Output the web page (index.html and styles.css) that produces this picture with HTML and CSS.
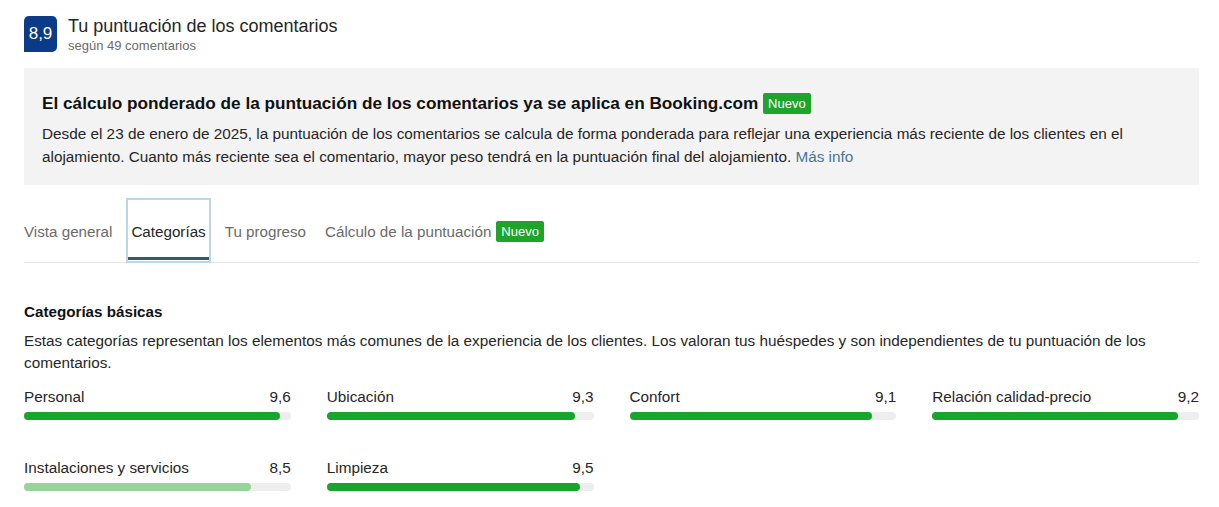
FILE: index.html
```html
<!DOCTYPE html>
<html>
<head>
    <title>Tu puntuación de los comentarios</title>
    <link rel="stylesheet" href="styles.css">
</head>
<body>
    <div class="page">
        <div class="score-header">
            <div class="score-badge">8,9</div>
            <div class="score-text">
                <div class="score-title">Tu puntuación de los comentarios</div>
                <div class="score-sub">según 49 comentarios</div>
            </div>
        </div>

        <div class="notice">
            <h2>El cálculo ponderado de la puntuación de los comentarios ya se aplica en Booking.com <span class="tag">Nuevo</span></h2>
            <p>Desde el 23 de enero de 2025, la puntuación de los comentarios se calcula de forma ponderada para reflejar una experiencia más reciente de los clientes en el alojamiento. Cuanto más reciente sea el comentario, mayor peso tendrá en la puntuación final del alojamiento. <a href="#">Más info</a></p>
        </div>

        <div class="tabs">
            <a class="tab" href="#">Vista general</a>
            <a class="tab active" href="#">Categorías</a>
            <a class="tab" href="#">Tu progreso</a>
            <a class="tab" href="#">Cálculo de la puntuación <span class="tag">Nuevo</span></a>
        </div>

        <h3>Categorías básicas</h3>
        <p class="desc">Estas categorías representan los elementos más comunes de la experiencia de los clientes. Los valoran tus huéspedes y son independientes de tu puntuación de los comentarios.</p>

        <div class="categories">
            <div class="cat">
                <div class="cat-row"><span>Personal</span><span>9,6</span></div>
                <div class="bar"><div class="fill" style="width: 96%"></div></div>
            </div>
            <div class="cat">
                <div class="cat-row"><span>Ubicación</span><span>9,3</span></div>
                <div class="bar"><div class="fill" style="width: 93%"></div></div>
            </div>
            <div class="cat">
                <div class="cat-row"><span>Confort</span><span>9,1</span></div>
                <div class="bar"><div class="fill" style="width: 91%"></div></div>
            </div>
            <div class="cat">
                <div class="cat-row"><span>Relación calidad-precio</span><span>9,2</span></div>
                <div class="bar"><div class="fill" style="width: 92%"></div></div>
            </div>
            <div class="cat">
                <div class="cat-row"><span>Instalaciones y servicios</span><span>8,5</span></div>
                <div class="bar"><div class="fill low" style="width: 85%"></div></div>
            </div>
            <div class="cat">
                <div class="cat-row"><span>Limpieza</span><span>9,5</span></div>
                <div class="bar"><div class="fill" style="width: 95%"></div></div>
            </div>
        </div>
    </div>
</body>
</html>
```

FILE: styles.css
```css
body {
    font-family: "Liberation Sans", Arial, sans-serif;
    color: #262626;
    margin: 0;
    background-color: #ffffff;
}
.page {
    padding: 14px 20px 0 24px;
}
.score-header {
    display: flex;
    gap: 11px;
}
.score-badge {
    width: 33px;
    height: 36px;
    margin-top: 2px;
    background-color: #0b3a87;
    color: white;
    font-size: 17px;
    display: flex;
    align-items: center;
    justify-content: center;
    border-radius: 5px 5px 5px 0;
}
.score-title {
    font-size: 18px;
    line-height: 24px;
}
.score-sub {
    font-size: 13px;
    color: #6b6b6b;
}
.notice {
    background-color: #f3f3f3;
    margin-top: 15px;
    padding: 24px 18px 17px;
}
.notice h2 {
    font-size: 17.2px;
    line-height: 22px;
    margin: 0 0 8px;
    color: #111;
}
.notice p {
    font-size: 15.3px;
    line-height: 23px;
    margin: 0;
}
.notice a {
    color: #4a7596;
    text-decoration: none;
}
.tag {
    display: inline-block;
    background-color: #1ea32b;
    color: white;
    font-size: 13px;
    line-height: 15px;
    font-weight: normal;
    padding: 3px 5px;
    border-radius: 2px;
    vertical-align: 1px;
}
.tabs {
    display: flex;
    gap: 9px;
    margin-top: 13px;
    border-bottom: 1px solid #e6e6e6;
}
.tab {
    display: flex;
    align-items: center;
    gap: 5px;
    color: #6b6b6b;
    font-size: 15.2px;
    line-height: 18px;
    text-decoration: none;
    padding: 23px 3px 20px;
    border: 2px solid transparent;
    margin-bottom: -1px;
}
.tab:first-child {
    padding-left: 0;
    border-left: 0;
}
.tab.active {
    color: #262626;
    border-color: #bcd6e2;
    box-shadow: inset 0 -1px 0 #fff, inset 0 -4px 0 #2d5d6e;
}
.tab .tag {
    margin: -2px 0 -1px;
}
h3 {
    font-size: 15.2px;
    margin: 40px 0 10px;
    color: #111;
}
.desc {
    font-size: 15.3px;
    line-height: 22px;
    margin: 0 0 12px;
}
.categories {
    display: grid;
    grid-template-columns: repeat(4, 1fr);
    column-gap: 36px;
    row-gap: 37px;
}
.cat-row {
    display: flex;
    justify-content: space-between;
    font-size: 15.3px;
    line-height: 22px;
}
.bar {
    height: 8px;
    margin-top: 4px;
    background-color: #eeeeee;
    border-radius: 4px;
}
.fill {
    height: 100%;
    background-color: #16a62b;
    border-radius: 4px;
}
.fill.low {
    background-color: #97d49a;
}
```
